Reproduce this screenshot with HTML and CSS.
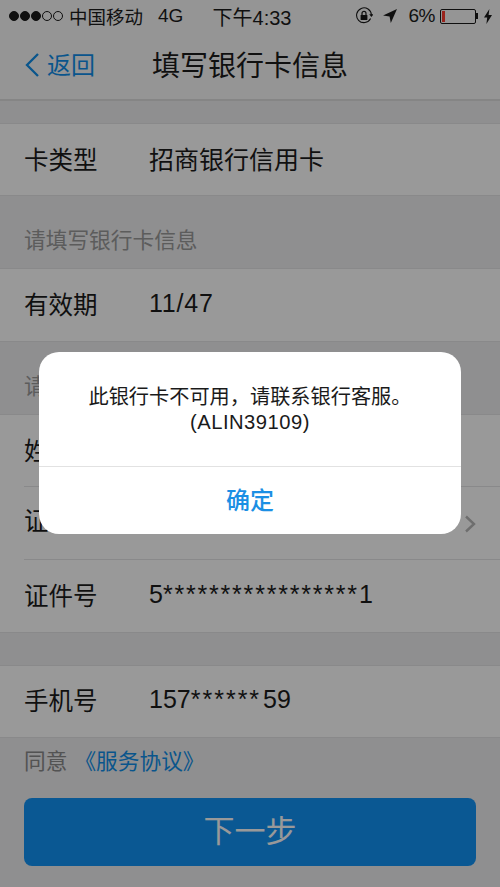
FILE: index.html
```html
<!DOCTYPE html>
<html lang="zh-CN">
<head>
<meta charset="utf-8">
<title>填写银行卡信息</title>
<link rel="stylesheet" href="styles.css">
</head>
<body>
<div class="page">
  <header class="status">
    <div class="status-left">
      <span class="signal"><i class="dot on"></i><i class="dot on"></i><i class="dot on"></i><i class="dot"></i><i class="dot"></i></span>
      <span class="carrier">中国移动</span>
      <span class="net">4G</span>
    </div>
    <div class="clock">下午4:33</div>
    <div class="status-right">
      <svg class="ic-lock" viewBox="0 0 18 18" width="18" height="18"><path d="M15.6 11.6A7.4 7.4 0 1 1 16.4 8" fill="none" stroke="#1a1a1a" stroke-width="1.1"/><path d="M14.2 7.2h4.4l-2.2 2.8z" fill="#1a1a1a"/><rect x="5.6" y="8" width="6.8" height="5" rx=".6" fill="#1a1a1a"/><path d="M7 8V6.4a2 2 0 0 1 4 0V8" fill="none" stroke="#1a1a1a" stroke-width="1.2"/></svg>
      <svg class="ic-loc" viewBox="0 0 14 14" width="14" height="14"><path d="M14 0 0 6.4l6.6 1 1.2 6.6z" fill="#1a1a1a"/></svg>
      <span class="pct">6%</span>
      <span class="battery"><i class="level"></i></span><i class="nub"></i>
      <svg class="ic-bolt" viewBox="0 0 8 15" width="8" height="15"><path d="M5.4 0 0 8.4h3.2L2.4 15 8 6H4.6z" fill="#1a1a1a"/></svg>
    </div>
  </header>

  <nav class="nav">
    <a class="back">
      <svg viewBox="0 0 16 26" width="16" height="26"><path d="M14 2 3 13l11 11" fill="none" stroke="currentColor" stroke-width="2.300"/></svg>
      <span class="back-text">返回</span>
    </a>
    <h1 class="title">填写银行卡信息</h1>
  </nav>

  <section class="group first">
    <div class="row"><span class="label">卡类型</span><span class="value">招商银行信用卡</span></div>
  </section>

  <p class="section-title">请填写银行卡信息</p>
  <section class="group">
    <div class="row tall"><span class="label">有效期</span><span class="value date">11/47</span></div>
  </section>

  <p class="section-title">请</p>
  <section class="group">
    <div class="row inset"><span class="label">姓名</span></div>
    <div class="row inset behind">
      <span class="label">证件类型</span><span class="value">身份证</span>
      <svg class="chevron" viewBox="0 0 12 18" width="12" height="18"><path d="M2 1.500 10 9l-8 7.500" fill="none" stroke="currentColor" stroke-width="2.400"/></svg>
    </div>
    <div class="row"><span class="label">证件号</span><span class="value">5<span class="stars">*****************</span>1</span></div>
  </section>

  <section class="group second">
    <div class="row"><span class="label">手机号</span><span class="value">157<span class="stars wide">******</span>59</span></div>
  </section>

  <p class="agree">同意<a class="link">《服务协议》</a></p>
  <button class="next" type="button">下一步</button>
</div>

<div class="overlay"></div>
<div class="dialog">
  <div class="message">
    <p>此银行卡不可用，请联系银行客服。</p>
    <p class="code">(ALIN39109)</p>
  </div>
  <button class="confirm" type="button">确定</button>
</div>
</body>
</html>
```
FILE: styles.css
```css
* { box-sizing: border-box; }
html, body { margin: 0; padding: 0; }
body {
  width: 500px;
  height: 887px;
  overflow: hidden;
  position: relative;
  background: #eeeef0;
  color: #1c1c1c;
  font-family: "Liberation Sans", "Noto Sans CJK SC", sans-serif;
}
p, h1 { margin: 0; font-weight: 400; }
.page { display: flex; flex-direction: column; height: 887px; }

.status {
  height: 32px;
  background: #f8f8f8;
  display: grid;
  grid-template-columns: 1fr auto 1fr;
  align-items: center;
  font-size: 18.500px;
  padding: 0 8px 0 9px;
}
.status-left { display: flex; align-items: center; }
.signal { display: flex; gap: 1px; margin-right: 6px; }
.dot { width: 10px; height: 10px; border-radius: 50%; border: 1px solid #1a1a1a; }
.dot.on { background: #1a1a1a; }
.net { margin-left: 15px; font-size: 19px; }
.clock { font-size: 20px; margin-left: 3px; }
.status-right { display: flex; align-items: center; justify-content: flex-end; }
.ic-lock { margin-right: 10px; }
.ic-loc { margin-right: 12px; }
.pct { font-size: 19px; letter-spacing: -.5px; margin-right: 5px; }
.battery {
  width: 36px; height: 15px;
  border: 1px solid #1a1a1a;
  border-radius: 2px;
  padding: 1px;
  display: flex;
}
.level { width: 3px; background: #ff3b30; }
.nub { width: 2px; height: 6px; background: #1a1a1a; margin-right: 6px; }

.nav {
  height: 69px;
  padding-bottom: 3px;
  background: #f8f8f8;
  border-bottom: 2px solid #dedede;
  display: flex;
  align-items: center;
  justify-content: center;
  position: relative;
}
.back {
  position: absolute;
  left: 24px;
  top: 8px;
  height: 50px;
  display: flex;
  align-items: center;
  gap: 7px;
  color: #108ee9;
  font-size: 24px;
}
.back-text { padding-bottom: 3px; }
.title { font-size: 28px; }

.group { background: #ffffff; border-bottom: 1px solid #e4e4e6; box-shadow: inset 0 1px 0 #e4e4e6; }
.group.first { margin-top: 22px; }
.group.second { margin-top: 32px; }
.section-title {
  height: 72px;
  padding: 30px 24px 0;
  font-size: 21.700px;
  line-height: 30px;
  color: #9a9a9a;
}
.row {
  height: 71.500px;
  margin-left: 24px;
  padding-bottom: 2px;
  display: flex;
  align-items: center;
  position: relative;
  font-size: 24.500px;
}
.row.tall { height: 73px; }
.row.inset { height: 73px; border-bottom: 1px solid #e4e4e6; }
.row.behind { padding-bottom: 7px; }
.group.first .row, .group.second .row { height: 72px; }
.label { width: 125px; flex: none; }
.value { font-size: 25px; }
.date { letter-spacing: .8px; }
.stars { letter-spacing: 1.800px; }
.stars.wide { letter-spacing: 2px; margin-right: 2px; }
.chevron { position: absolute; right: 24px; top: 28px; color: #b8b8b8; }

.agree { margin: 9px 24px 0; font-size: 21.700px; line-height: 30px; color: #8a8a8a; }
.link { color: #108ee9; margin-left: 7px; }
.next {
  margin: 21px 24px 0;
  height: 68px;
  padding: 0 0 6px;
  border: 0;
  border-radius: 8px;
  background: #1293f6;
  color: #ffffff;
  font: inherit;
  font-size: 31px;
}

.overlay { position: absolute; inset: 0; background: rgba(0, 0, 0, .4); }
.dialog {
  position: absolute;
  left: 39px;
  top: 352px;
  width: 422px;
  height: 182px;
  background: #ffffff;
  border-radius: 20px;
  display: flex;
  flex-direction: column;
  color: #1a1a1a;
}
.message {
  height: 115px;
  padding-top: 33px;
  text-align: center;
  font-size: 20.200px;
  line-height: 24.500px;
  border-bottom: 1px solid #e2e2e2;
}
.code { letter-spacing: .5px; }
.confirm {
  flex: 1;
  padding: 0 0 5px;
  border: 0;
  background: none;
  color: #1b8fe4;
  font: inherit;
  font-size: 24px;
  font-weight: 500;
}
```
